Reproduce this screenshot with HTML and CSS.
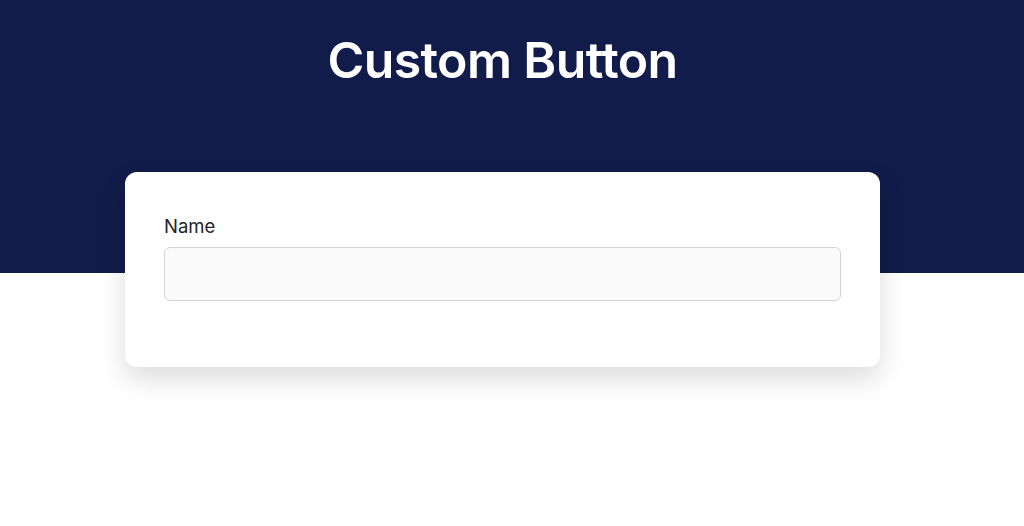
FILE: index.html
```html
<!DOCTYPE html>
<html>
<head>
<meta charset="utf-8">
<link rel="stylesheet" href="styles.css">
</head>
<body>
<header class="hero">
  <h1 class="title">Custom Button</h1>
</header>
<main class="content">
  <section class="card">
    <label class="label" for="name">Name</label>
    <input class="input" id="name" type="text">
  </section>
</main>
</body>
</html>
```
FILE: styles.css
```css
* { box-sizing: border-box; }
html, body { margin: 0; padding: 0; background: #ffffff; }
body { font-family: Inter, "Noto Sans", sans-serif; min-height: 100vh; }
.hero {
  background: #111c4a;
  height: 273px;
  display: flex;
  justify-content: center;
  padding-top: 28px;
  padding-right: 19px;
}
.title {
  margin: 0;
  color: #ffffff;
  font-family: Inter, "Noto Sans", sans-serif;
  font-weight: 600;
  font-size: 50px;
  line-height: 64px;
  letter-spacing: -0.6px;
}
.content {
  display: flex;
  justify-content: center;
  margin-top: -101px;
  padding-right: 19px;
  padding-bottom: 80px;
}
.card {
  width: 755px;
  background: #ffffff;
  border-radius: 12px;
  box-shadow: 0 12px 28px rgba(0,0,0,0.14);
  padding: 41px 39px 66px;
  display: flex;
  flex-direction: column;
  gap: 8px;
}
.label {
  color: #222222;
  font-size: 18.5px;
  line-height: 26px;
  font-weight: 400;
}
.input {
  height: 54px;
  border: 1px solid #d4d4d4;
  border-radius: 6px;
  background: #fafafa;
  font: inherit;
  outline: none;
}
```
